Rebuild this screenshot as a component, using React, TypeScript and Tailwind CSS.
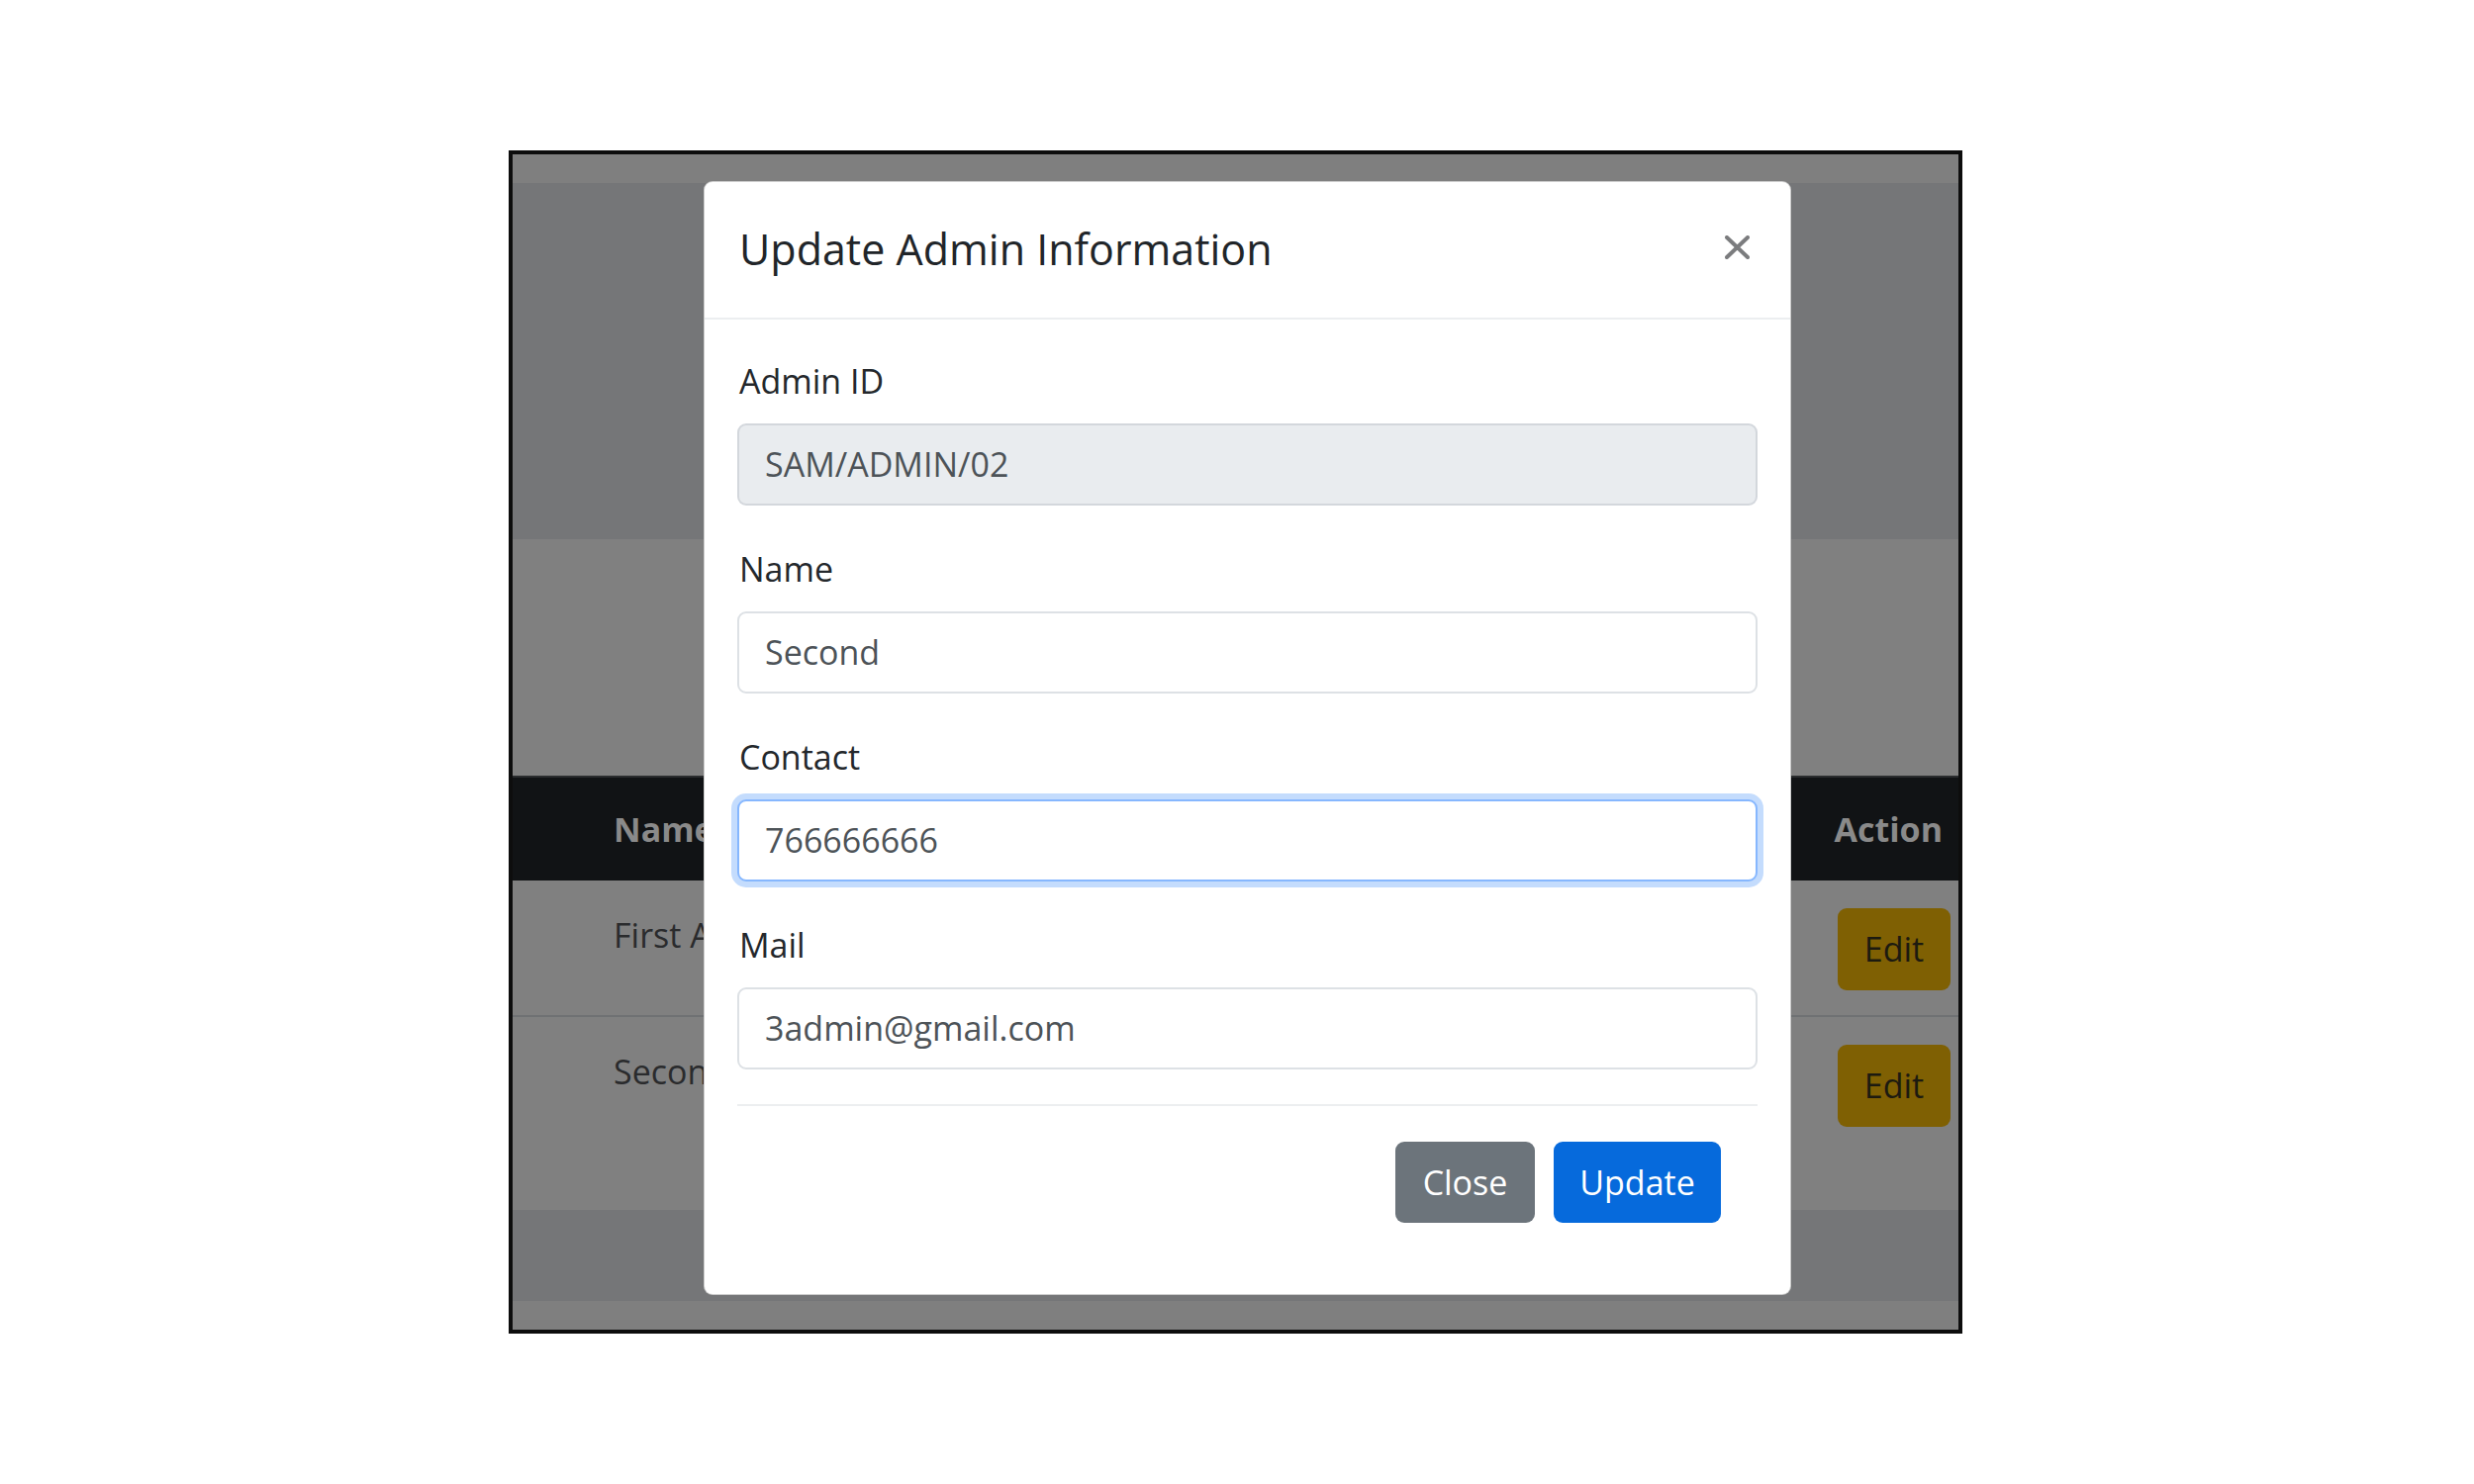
const FIELDS = [
  { label: "Admin ID", value: "SAM/ADMIN/02", kind: "readonly" },
  { label: "Name", value: "Second", kind: "normal" },
  { label: "Contact", value: "766666666", kind: "focus" },
  { label: "Mail", value: "3admin@gmail.com", kind: "normal" },
];

const ROWS = [
  { name: "First Admin", h: "h-[138px] border-b-2 border-[#6f7173]" },
  { name: "Second Admin", h: "h-[195px]" },
];

function Field({ label, value, kind }: { label: string; value: string; kind: string }) {
  const box =
    kind === "readonly"
      ? "bg-[#e9ecef] border-[#d3d7dc]"
      : kind === "focus"
        ? "bg-white border-[#86b7fe] ring-[6px] ring-[#c4dcfd]"
        : "bg-white border-[#dde1e5]";
  return (
    <div className="flex flex-col">
      <div className="pl-[2px] text-[34px] leading-[48px] text-[#24282c] mb-[19px]">{label}</div>
      <div className={`h-[83px] rounded-[9px] border-2 px-[26px] flex items-center text-[34px] text-[#4d5358] ${box}`}>
        {value}
      </div>
    </div>
  );
}

export default function App() {
  return (
    <div
      className="w-[2500px] h-[1500px] bg-white pl-[514px] pt-[152px]"
      style={{ fontFamily: '"Open Sans", "Noto Sans", sans-serif' }}
    >
      {/* page behind the backdrop */}
      <div className="relative w-[1469px] h-[1196px] border-4 border-[#0d0d0d] bg-[#808080] flex flex-col overflow-hidden">
        <div className="h-[29px] bg-[#7f7f7f]" />
        <div className="h-[360px] bg-[#757678]" />
        <div className="h-[239px] bg-[#808080]" />

        <div className="h-[106px] bg-[#111315] border-t-2 border-[#2a2c2e] flex items-center justify-between pl-[102px] pr-[16px] text-[34px] font-bold text-[#8a8a8a]">
          {/* cut where the modal starts */}
          <span className="w-[91px] overflow-hidden whitespace-nowrap">Name</span>
          <span>Action</span>
        </div>

        {ROWS.map((r) => (
          <div key={r.name} className={`${r.h} bg-[#808080] flex items-start justify-between pl-[102px] pr-[8px] pt-[28px]`}>
            <span className="mt-[3px] w-[91px] overflow-hidden whitespace-nowrap text-[34px] leading-[48px] text-[#2a2b2d]">
              {r.name}
            </span>
            <div className="w-[114px] h-[83px] rounded-[9px] bg-[#7f6003] flex items-center justify-center text-[34px] text-[#1c1a10]">
              Edit
            </div>
          </div>
        ))}

        <div className="h-[92px] bg-[#757678]" />
        <div className="flex-1 bg-[#7f7f7f]" />

        {/* modal */}
        <div className="absolute left-[193px] top-[27px] w-[1099px] bg-white rounded-[9px] border border-black/20 flex flex-col">
          <div className="h-[139px] border-b-2 border-[#eceef0] flex items-center justify-between pl-[35px] pr-[41px]">
            <span className="text-[43px] leading-[1.5] font-medium text-[#212529]">Update Admin Information</span>
            <svg width="25" height="24" viewBox="0 0 25 24" className="mb-[5px]">
              <path d="M2 2 L23 22 M23 2 L2 22" stroke="#7b7c7e" strokeWidth="4" strokeLinecap="round" />
            </svg>
          </div>

          <div className="px-[33px] pt-[38px] pb-[36px] flex flex-col">
            <div className="flex flex-col gap-[40px]">
              {FIELDS.map((f) => (
                <Field key={f.label} {...f} />
              ))}
            </div>

            <div className="mt-[35px] border-t-2 border-[#eceef0] pt-[36px] pb-[36px] pr-[37px] flex justify-end gap-[19px]">
              <div className="w-[141px] h-[82px] rounded-[9px] bg-[#6c747b] text-white text-[34px] flex items-center justify-center">
                Close
              </div>
              <div className="w-[169px] h-[82px] rounded-[9px] bg-[#066adc] text-white text-[34px] flex items-center justify-center">
                Update
              </div>
            </div>
          </div>
        </div>
      </div>
    </div>
  );
}
